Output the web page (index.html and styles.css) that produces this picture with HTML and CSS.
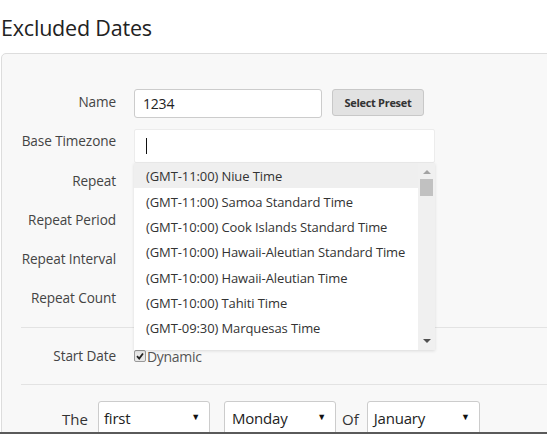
FILE: index.html
```html
<!DOCTYPE html>
<html>
<head>
<meta charset="utf-8">
<link rel="stylesheet" href="styles.css">
</head>
<body>
<h1 class="title">Excluded Dates</h1>
<div class="panel">
  <div class="row row-name">
    <div class="lbl">Name</div>
    <div class="field">
      <div class="txt">1234</div>
      <div class="btn">Select Preset</div>
    </div>
  </div>
  <div class="row row-tz">
    <div class="lbl">Base Timezone</div>
    <div class="field tz-field">
      <div class="tz-input"><span class="caret"></span></div>
      <div class="dropdown">
        <div class="items">
          <div class="item active">(GMT-11:00) Niue Time</div>
          <div class="item">(GMT-11:00) Samoa Standard Time</div>
          <div class="item">(GMT-10:00) Cook Islands Standard Time</div>
          <div class="item">(GMT-10:00) Hawaii-Aleutian Standard Time</div>
          <div class="item">(GMT-10:00) Hawaii-Aleutian Time</div>
          <div class="item">(GMT-10:00) Tahiti Time</div>
          <div class="item">(GMT-09:30) Marquesas Time</div>
        </div>
        <div class="sbar">
          <div class="arrow up"></div>
          <div class="thumb"></div>
          <div class="sfill"></div>
          <div class="arrow down"></div>
        </div>
      </div>
    </div>
  </div>
  <div class="row row-rep first-rep"><div class="lbl">Repeat</div></div>
  <div class="row row-rep"><div class="lbl">Repeat Period</div></div>
  <div class="row row-rep"><div class="lbl">Repeat Interval</div></div>
  <div class="row row-rep"><div class="lbl">Repeat Count</div></div>
  <div class="rule rule-a"></div>
  <div class="row row-start">
    <div class="lbl">Start Date</div>
    <div class="field check-field">
      <span class="chk"><svg width="10" height="10" viewBox="0 0 10 10"><path d="M2 5.2 L4.2 7.5 L8 2.5" fill="none" stroke="#222" stroke-width="1.8"/></svg></span>
      <span class="chk-text">Dynamic</span>
    </div>
  </div>
  <div class="rule"></div>
  <div class="row-when">
    <span class="word the">The</span>
    <div class="sel s1">first<span class="tri">▼</span></div>
    <div class="sel s2">Monday<span class="tri">▼</span></div>
    <span class="word of">Of</span>
    <div class="sel s3">January<span class="tri">▼</span></div>
  </div>
</div>
<div class="edge"></div>
</body>
</html>
```

FILE: styles.css
```css
html, body {
  margin: 0;
  padding: 0;
  background: #fff;
  overflow: hidden;
  height: 434px;
}
body {
  font-family: "Open Sans", "Noto Sans", sans-serif;
  color: #333;
}
.title {
  margin: 12px 0 0 1px;
  font-size: 21.5px;
  font-weight: 400;
  line-height: 32px;
  height: 32px;
  color: #222;
  letter-spacing: -0.2px;
}
.panel {
  margin: 9px 0 0 1px;
  width: 600px;
  height: 420px;
  box-sizing: border-box;
  border: 1px solid #ddd;
  border-radius: 5px;
  background: #f8f8f8;
}
.row {
  display: flex;
  align-items: center;
}
.lbl {
  width: 114px;
  flex: none;
  text-align: right;
  font-size: 13.6px;
  color: #444;
  letter-spacing: -0.1px;
  line-height: 18px;
}
.field {
  margin-left: 18px;
  display: flex;
  align-items: center;
}
.row-name {
  margin-top: 35px;
  height: 29px;
}
.row-name .lbl {
  margin-top: -3px;
}
.txt {
  width: 186px;
  height: 27px;
  border: 1px solid #ccc;
  border-radius: 3px;
  background: #fff;
  font-size: 14px;
  line-height: 27px;
  text-indent: 8px;
  color: #222;
  letter-spacing: -0.2px;
}
.btn {
  margin-left: 10px;
  margin-top: -2px;
  width: 90px;
  height: 25px;
  border: 1px solid #c8c8c8;
  border-radius: 3px;
  background: #e2e2e2;
  font-size: 11px;
  font-weight: 700;
  color: #333;
  text-align: center;
  line-height: 25px;
  letter-spacing: -0.3px;
}
.row-tz {
  margin-top: 11px;
  height: 34px;
  align-items: flex-start;
  position: relative;
  z-index: 2;
}
.row-tz .lbl {
  padding-top: 3px;
}
.tz-field {
  position: relative;
}
.tz-input {
  width: 299px;
  height: 32px;
  border: 1px solid #ececec;
  background: #fff;
  border-radius: 2px;
  position: relative;
}
.caret {
  position: absolute;
  left: 11px;
  top: 8px;
  width: 1px;
  height: 16px;
  background: #111;
}
.dropdown {
  position: absolute;
  left: 0;
  top: 34px;
  width: 301px;
  height: 187px;
  background: #fff;
  box-shadow: 0 1px 3px rgba(0, 0, 0, 0.12);
  display: flex;
  overflow: hidden;
}
.items {
  flex: 1;
  overflow: hidden;
}
.item {
  box-sizing: border-box;
  height: 25.33px;
  line-height: 23px;
  padding-top: 2.33px;
  padding-left: 12px;
  font-size: 13px;
  color: #333;
  white-space: nowrap;
  letter-spacing: -0.1px;
}
.item.active {
  background: #efefef;
}
.sbar {
  width: 17px;
  flex: none;
  background: #f0f0f0;
  display: flex;
  flex-direction: column;
  align-items: center;
}
.arrow {
  width: 0;
  height: 0;
  border-left: 4px solid transparent;
  border-right: 4px solid transparent;
}
.arrow.up {
  margin-top: 7px;
  border-bottom: 4px solid #a3a3a3;
}
.arrow.down {
  margin-bottom: 7px;
  border-top: 4px solid #505050;
}
.thumb {
  margin-top: 5px;
  width: 13px;
  height: 17px;
  background: #c1c1c1;
}
.sfill {
  flex: 1;
}
.row-rep {
  height: 39px;
}
.first-rep {
  margin-top: -2px;
}
.rule {
  margin: 9px 0 0 19px;
  height: 1px;
  background: #e3e3e3;
}
.rule-a {
  margin-top: 10px;
}
.row-start {
  margin-top: 9px;
  height: 38px;
}
.check-field {
  align-items: center;
}
.chk {
  width: 10px;
  height: 10px;
  border: 1px solid #999;
  background: #e8e8e8;
  border-radius: 2px;
  display: inline-flex;
  margin-top: -1px;
}
.chk-text {
  font-size: 14px;
  color: #555;
  margin-left: 1px;
  letter-spacing: -0.3px;
}
.row-when {
  display: flex;
  align-items: flex-start;
  padding: 16px 0 0 60px;
}
.word {
  font-size: 15px;
  color: #333;
  margin-top: 8px;
}
.the {
  width: 36px;
}
.of {
  margin: 8px 8px 0 6px;
}
.sel {
  position: relative;
  height: 36px;
  width: 110px;
  border: 1px solid #ccc;
  border-radius: 3px;
  background: #fff;
  font-size: 15px;
  line-height: 32px;
  text-indent: 5px;
  color: #222;
  letter-spacing: -0.2px;
}
.s2 {
  margin-left: 14px;
  text-indent: 7px;
}
.s3 {
  width: 111px;
  text-indent: 6px;
}
.tri {
  position: absolute;
  right: 9px;
  top: 0;
  font-size: 9px;
  text-indent: 0;
  color: #111;
  line-height: 30px;
}
.edge {
  position: fixed;
  left: 0;
  right: 0;
  bottom: 0;
  height: 2px;
  background: #5a5a5a;
}
```
